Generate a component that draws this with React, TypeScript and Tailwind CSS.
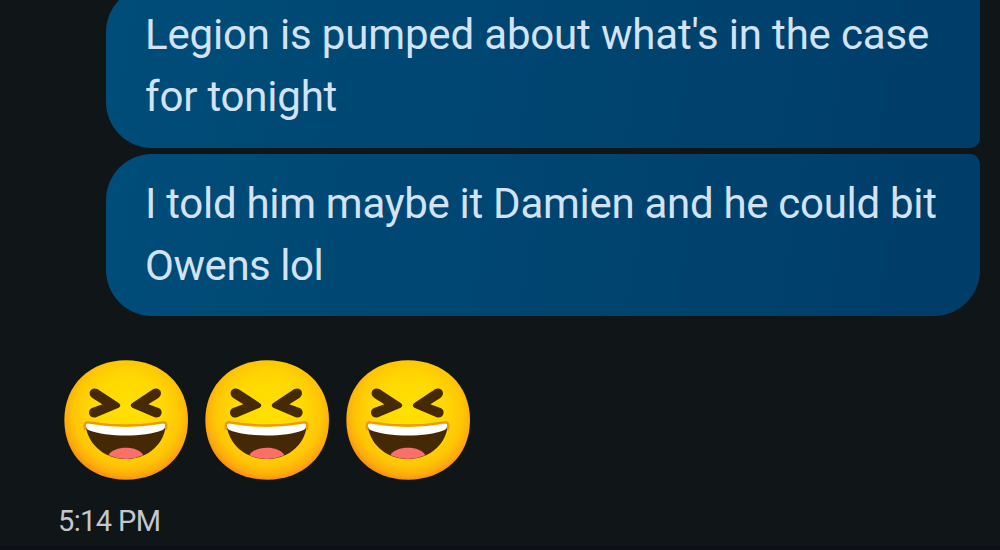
import React from 'react';

interface BubbleProps {
  className: string;
  children: React.ReactNode;
}

function Bubble({ className, children }: BubbleProps) {
  return (
    <div
      className={`h-[162px] w-[874px] shrink-0 rounded-l-[46px] bg-linear-[100deg] from-[#004d79] to-[#003d69] pl-[39px] text-[42px] leading-[62px] whitespace-nowrap text-[#d3e3f6] ${className}`}
    >
      {children}
    </div>
  );
}

function LaughingFace({ id }: { id: string }) {
  return (
    <svg
      viewBox="42 28 372 360"
      role="img"
      aria-label="Laughing face"
      className="h-[120px] w-[124px]"
    >
      <defs>
        <radialGradient id={id} cx="232" cy="185" r="206" gradientUnits="userSpaceOnUse">
          <stop offset="0" stopColor="#ffe000" />
          <stop offset="0.5" stopColor="#ffd902" />
          <stop offset="0.78" stopColor="#fec605" />
          <stop offset="0.92" stopColor="#fdab0c" />
          <stop offset="1" stopColor="#f68a12" />
        </radialGradient>
      </defs>
      <path
        d="M228 29C336 29 414 103 414 208C414 316 336 387 228 387C120 387 43 316 43 208C43 103 120 29 228 29Z"
        fill={`url(#${id})`}
      />
      {/* eyes */}
      <g fill="#452a05">
        <path d="M142 115L206 157Q216 165 206 171L138 200C118 205 109 180 126 172L157 161L127 142C110 129 122 107 142 115Z" />
        <path d="M310 115L247 157Q237 165 247 171L314 200C334 205 343 180 326 172L295 161L325 142C342 129 330 107 310 115Z" />
      </g>
      {/* mouth */}
      <path
        d="M107 224C165 240 287 240 347 224C344 274 300 325 228 325C156 325 112 274 107 224Z"
        fill="#452805"
      />
      <path d="M175 314C190 284 266 284 280 314Q228 336 175 314Z" fill="#fb6f6a" />
      <path
        d="M107 222Q108 217 117 219Q228 239 337 219Q347 217 346 223Q346 235 336 239C285 260 170 260 117 239Q107 234 107 222Z"
        fill="#fff"
      />
      <path
        d="M105 235Q101 213 116 215Q228 234 337 215Q353 213 348 235"
        fill="none"
        stroke="#ee980a"
        strokeWidth="7"
        strokeLinecap="round"
      />
    </svg>
  );
}

export default function App() {
  return (
    <main className="flex h-[550px] w-[1000px] flex-col overflow-hidden border-b-4 border-[#0d1017] bg-[#101517] font-['Roboto',sans-serif]">
      <section className="-mt-[14px] ml-[106px] flex flex-col gap-[6px]">
        <Bubble className="rounded-r-[10px] pt-[18px]">
          <p className="tracking-[-0.17px]">Legion is pumped about what's in the case</p>
          <p className="tracking-[-0.2px]">for tonight</p>
        </Bubble>
        <Bubble className="rounded-tr-[10px] rounded-br-[46px] pt-[19px]">
          <p className="tracking-[-0.29px]">I told him maybe it Damien and he could bit</p>
          <p className="tracking-[-0.45px]">Owens lol</p>
        </Bubble>
      </section>
      <section className="mt-[44px] ml-[64px] flex gap-[17px]">
        <LaughingFace id="face-left" />
        <LaughingFace id="face-middle" />
        <LaughingFace id="face-right" />
      </section>
      <time className="mt-[23px] ml-[58px] text-[29px] leading-9 tracking-[-0.6px] text-[#c4c7ce]">
        5:14 PM
      </time>
    </main>
  );
}
